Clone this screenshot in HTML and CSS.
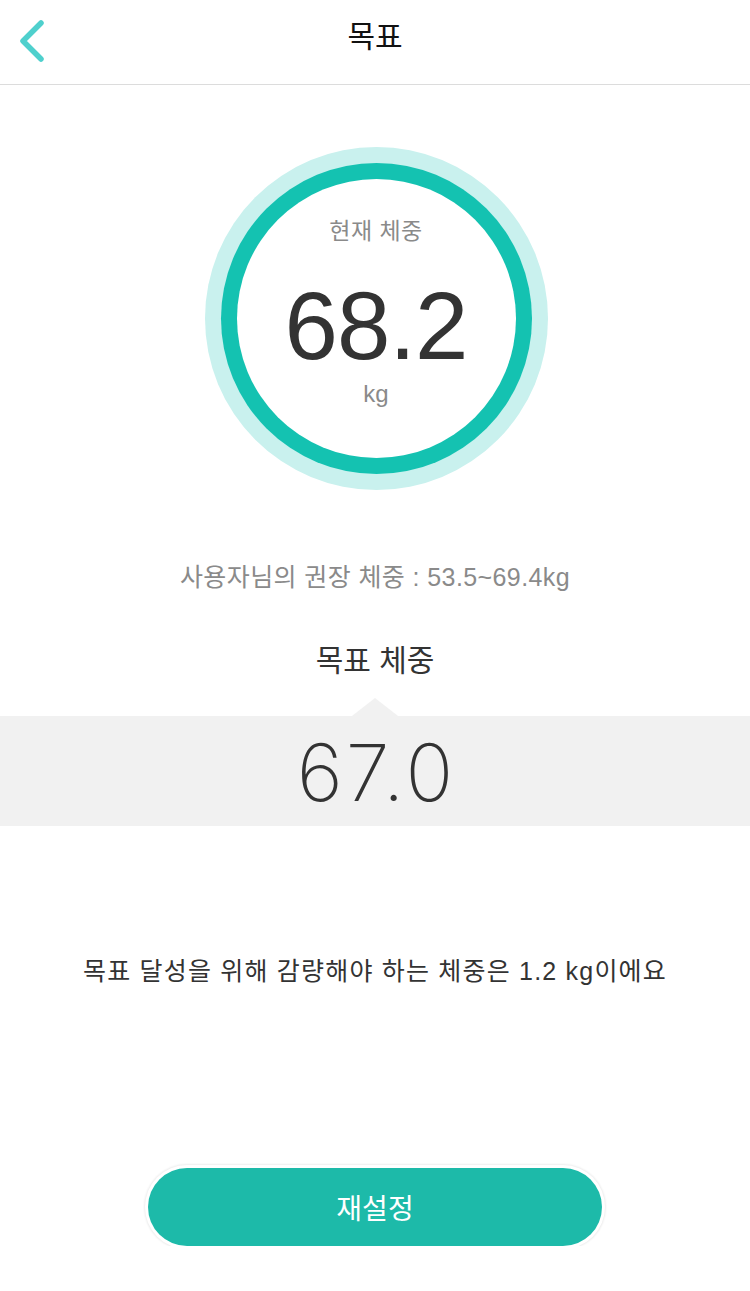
FILE: index.html
```html
<!DOCTYPE html>
<html lang="ko">
<head>
<meta charset="utf-8">
<link rel="stylesheet" href="styles.css">
</head>
<body>
<div class="page">
  <header class="topbar">
    <button class="back" aria-label="뒤로">
      <svg width="30" height="44" viewBox="0 0 30 44"><path d="M23 4 L5 22 L23 40" fill="none" stroke="#4fd0cd" stroke-width="5.5" stroke-linecap="round" stroke-linejoin="round"/></svg>
    </button>
    <h1 class="title">목표</h1>
  </header>

  <section class="gauge-wrap">
    <div class="ring-outer">
      <div class="ring-inner">
        <div class="gauge">
          <div class="gauge-label">현재 체중</div>
          <div class="gauge-value">68.2</div>
          <div class="gauge-unit">kg</div>
        </div>
      </div>
    </div>
  </section>

  <p class="recommend">사용자님의 권장 체중 : 53.5~69.4kg</p>

  <h2 class="target-label">목표 체중</h2>
  <div class="picker">
    <div class="picker-value">67.0</div>
  </div>

  <p class="message">목표 달성을 위해 감량해야 하는 체중은 1.2 kg이에요</p>

  <div class="actions">
    <button class="reset">재설정</button>
  </div>
</div>
</body>
</html>
```

FILE: styles.css
```css
* { box-sizing: border-box; }
html, body { margin: 0; padding: 0; background: #fff; }
body {
  font-family: "Liberation Sans", "Noto Sans CJK KR", sans-serif;
  color: #333;
  width: 750px;
}
.page { display: flex; flex-direction: column; align-items: stretch; }

.topbar {
  height: 85px;
  border-bottom: 1px solid #dcdcdc;
  display: flex;
  align-items: center;
  justify-content: center;
  position: relative;
}
.back {
  position: absolute;
  left: 18px;
  top: 19px;
  padding: 0;
  border: 0;
  background: none;
  width: 30px;
  height: 44px;
}
.back svg { display: block; }
.title {
  margin: 0;
  font-size: 30px;
  font-weight: 400;
  color: #111;
  line-height: 40px;
  margin-top: -10px;
}

.gauge-wrap {
  display: flex;
  justify-content: center;
  margin-top: 62px;
}
.ring-outer {
  width: 343px;
  height: 343px;
  border-radius: 50%;
  background: #c9f1ee;
  padding: 16px;
  margin-left: 2px;
}
.ring-inner {
  width: 100%;
  height: 100%;
  border-radius: 50%;
  background: #14c2b1;
  padding: 16px;
}
.gauge {
  width: 100%;
  height: 100%;
  border-radius: 50%;
  background: #fff;
  display: flex;
  flex-direction: column;
  align-items: center;
  padding-top: 37px;
}
.gauge-label {
  font-size: 23px;
  line-height: 30px;
  color: #8a8a8a;
  letter-spacing: 0.5px;
}
.gauge-value {
  font-size: 96px;
  line-height: 96px;
  color: #333;
  margin-top: 32px;
  letter-spacing: -1px;
}
.gauge-unit {
  font-size: 24px;
  line-height: 30px;
  color: #8a8a8a;
  margin-top: 5px;
}

.recommend {
  margin: 70px 0 0;
  text-align: center;
  font-size: 25px;
  line-height: 34px;
  color: #8a8a8a;
  letter-spacing: 0.4px;
}

.target-label {
  margin: 47px 0 0;
  text-align: center;
  font-size: 30px;
  font-weight: 400;
  line-height: 40px;
  color: #333;
}

.picker {
  position: relative;
  margin-top: 35px;
  height: 110px;
  background: #f1f1f1;
  display: flex;
  align-items: center;
  justify-content: center;
}
.picker::before {
  content: "";
  position: absolute;
  left: 352px;
  top: -18px;
  border-left: 23px solid transparent;
  border-right: 23px solid transparent;
  border-bottom: 18px solid #f1f1f1;
}
.picker-value {
  font-family: "Inter", "Liberation Sans", sans-serif;
  font-weight: 150;
  font-size: 79px;
  line-height: 90px;
  color: #333;
  margin-top: 2px;
  letter-spacing: 3px;
  padding-left: 3px;
}

.message {
  margin: 128px 0 0;
  text-align: center;
  font-size: 25px;
  line-height: 34px;
  color: #333;
  letter-spacing: 1.2px;
}

.actions {
  display: flex;
  justify-content: center;
  margin-top: 180px;
}
.reset {
  width: 454px;
  height: 78px;
  border: 0;
  border-radius: 39px;
  background: #1dbaa9;
  color: #fff;
  font-family: "Noto Sans CJK KR", "Noto Sans", sans-serif;
  font-size: 28px;
  box-shadow: 0 0 0 3px #fff, 0 0 2px 4px rgba(0, 0, 0, 0.07);
}
```
